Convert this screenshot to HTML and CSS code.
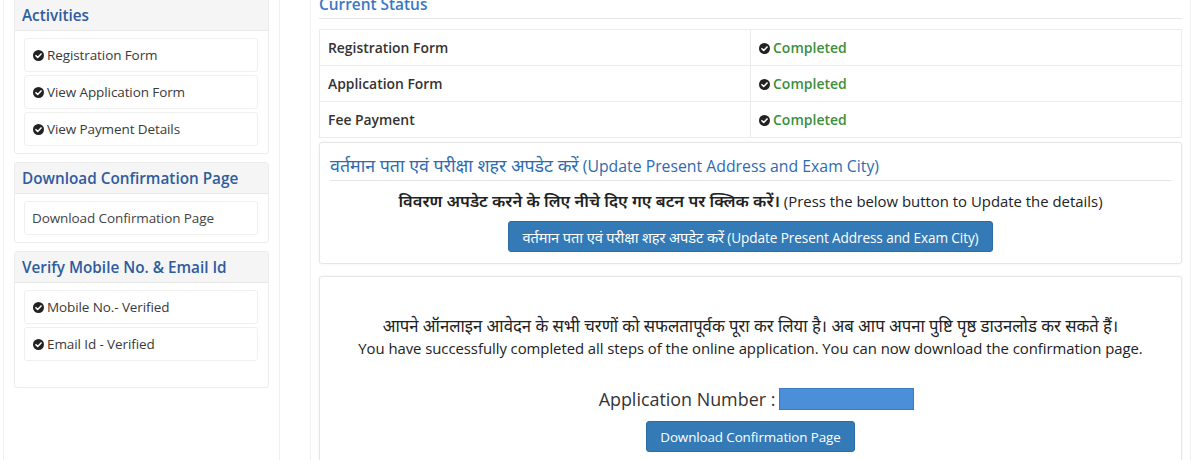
FILE: index.html
```html
<!DOCTYPE html>
<html lang="hi">
<head>
<meta charset="utf-8">
<title>Dashboard</title>
<link rel="stylesheet" href="styles.css">
</head>
<body>
<div class="page">
  <aside class="side-col">
    <section class="panel first">
      <div class="panel-head">Activities</div>
      <div class="panel-body">
        <div class="item"><svg class="ok" viewBox="0 0 12 12"><circle cx="6" cy="6" r="6"/><path d="M3.2 6.2l1.9 1.9 3.7-3.8" /></svg>Registration Form</div>
        <div class="item"><svg class="ok" viewBox="0 0 12 12"><circle cx="6" cy="6" r="6"/><path d="M3.2 6.2l1.9 1.9 3.7-3.8" /></svg>View Application Form</div>
        <div class="item"><svg class="ok" viewBox="0 0 12 12"><circle cx="6" cy="6" r="6"/><path d="M3.2 6.2l1.9 1.9 3.7-3.8" /></svg>View Payment Details</div>
      </div>
    </section>
    <section class="panel">
      <div class="panel-head">Download Confirmation Page</div>
      <div class="panel-body">
        <div class="item plain">Download Confirmation Page</div>
      </div>
    </section>
    <section class="panel">
      <div class="panel-head">Verify Mobile No. &amp; Email Id</div>
      <div class="panel-body tall">
        <div class="item"><svg class="ok" viewBox="0 0 12 12"><circle cx="6" cy="6" r="6"/><path d="M3.2 6.2l1.9 1.9 3.7-3.8" /></svg>Mobile No.- Verified</div>
        <div class="item"><svg class="ok" viewBox="0 0 12 12"><circle cx="6" cy="6" r="6"/><path d="M3.2 6.2l1.9 1.9 3.7-3.8" /></svg>Email Id - Verified</div>
      </div>
    </section>
  </aside>

  <main class="main-col">
    <h3 class="status-title">Current Status</h3>
    <table class="status">
      <tr><td>Registration Form</td><td class="done"><svg class="ok" viewBox="0 0 12 12"><circle cx="6" cy="6" r="6"/><path d="M3.2 6.2l1.9 1.9 3.7-3.8" /></svg>Completed</td></tr>
      <tr><td>Application Form</td><td class="done"><svg class="ok" viewBox="0 0 12 12"><circle cx="6" cy="6" r="6"/><path d="M3.2 6.2l1.9 1.9 3.7-3.8" /></svg>Completed</td></tr>
      <tr><td>Fee Payment</td><td class="done"><svg class="ok" viewBox="0 0 12 12"><circle cx="6" cy="6" r="6"/><path d="M3.2 6.2l1.9 1.9 3.7-3.8" /></svg>Completed</td></tr>
    </table>

    <section class="box update">
      <h4 class="update-title"><span class="dv">वर्तमान पता एवं परीक्षा शहर अपडेट करें</span> (Update Present Address and Exam City)</h4>
      <p class="update-text"><span class="dv">विवरण अपडेट करने के लिए नीचे दिए गए बटन पर क्लिक करें।</span> (Press the below button to Update the details)</p>
      <div class="center"><button class="btn wide"><span class="dv">वर्तमान पता एवं परीक्षा शहर अपडेट करें</span> (Update Present Address and Exam City)</button></div>
    </section>

    <section class="box download">
      <p class="hi-line"><span class="dv">आपने ऑनलाइन आवेदन के सभी चरणों को सफलतापूर्वक पूरा कर लिया है। अब आप अपना पुष्टि पृष्ठ डाउनलोड कर सकते हैं।</span></p>
      <p class="en-line">You have successfully completed all steps of the online application. You can now download the confirmation page.</p>
      <div class="appno">Application Number : <span class="mask"></span></div>
      <div class="center"><button class="btn">Download Confirmation Page</button></div>
    </section>
  </main>
</div>
</body>
</html>
```

FILE: styles.css
```css
* { box-sizing: border-box; }
html, body { margin: 0; padding: 0; background: #fff; }
body {
  font-family: "Open Sans", "Noto Sans", sans-serif;
  color: #333;
  font-size: 13px;
  overflow: hidden;
  height: 460px;
}
.page {
  display: flex;
  margin-top: -6px;
  padding-left: 3px;
  gap: 30px;
}
.side-col {
  width: 277px;
  border-left: 1px solid #f1f1f1;
  border-right: 1px solid #f1f1f1;
  padding: 0 10px;
  min-height: 480px;
}
.panel {
  border: 1px solid #ececec;
  border-radius: 3px;
  margin-top: 8px;
  background: #fff;
}
.panel.first { margin-top: 0; }
.panel-head {
  background: #f5f5f5;
  border-bottom: 1px solid #e8e8e8;
  color: #2f5c9e;
  font-size: 15.3px;
  font-weight: 600;
  line-height: 20px;
  padding: 5px 7px;
}
.panel.first .panel-head { padding-top: 10px; }
.panel-body {
  padding: 7px 10px 7px 9px;
  display: flex;
  flex-direction: column;
  gap: 3px;
}
.panel-body.tall { padding-bottom: 26px; }
.item {
  border: 1px solid #efefef;
  border-radius: 3px;
  height: 34px;
  display: flex;
  align-items: center;
  padding-left: 8px;
  font-size: 13.5px;
  color: #3a3a3a;
  letter-spacing: -0.1px;
}
.item.plain { padding-left: 7px; color: #444; }
.ok {
  width: 11px;
  height: 11px;
  margin-right: 3px;
  flex: none;
}
.ok circle { fill: #222; }
.ok path { fill: none; stroke: #fff; stroke-width: 1.7; stroke-linecap: round; stroke-linejoin: round; }

.main-col {
  width: 881px;
  border-left: 1px solid #f1f1f1;
  border-right: 1px solid #f1f1f1;
  padding: 0 8px;
  min-height: 480px;
}
.status-title {
  margin: 0;
  font-size: 15.4px;
  font-weight: 600;
  color: #3a78c4;
  line-height: 20px;
  padding-top: 1px;
  padding-bottom: 3px;
  border-bottom: 1px solid #e6e6e6;
}
.status {
  width: 100%;
  border-collapse: collapse;
  margin-top: 10px;
  border: 1px solid #e9e9e9;
}
.status td {
  border: 1px solid #ececec;
  height: 36px;
  padding: 0 8px;
  font-weight: 600;
  font-size: 13.9px;
  color: #333;
  width: 50%;
}
.status td.done { color: #3c8f3c; font-size: 14px; }
.status td.done .ok { vertical-align: -1px; }

.box {
  border: 1px solid #e6e6e6;
  border-radius: 3px;
  box-shadow: 0 0 3px rgba(0,0,0,0.06);
  background: #fff;
}
.update {
  margin-top: 4px;
  padding: 11px 10px 11px 10px;
}
.update-title {
  margin: 0;
  font-size: 15.8px;
  font-weight: 400;
  color: #2d6bb1;
  line-height: 22px;
  padding-bottom: 3px;
  border-bottom: 1px solid #e3e3e3;
}
.update-title .dv { font-size: 17.8px; }
.update-text {
  margin: 9px 0 9px;
  text-align: center;
  font-size: 14.9px;
  color: #222;
  line-height: 22px;
}
.update-text .dv { font-size: 16.5px; font-weight: 600; }
.center { text-align: center; }
.btn {
  font-family: "Open Sans", "Noto Sans", sans-serif;
  background: #337ab7;
  border: 1px solid #2e6da4;
  border-radius: 3px;
  color: #fff;
  font-size: 13.4px;
  height: 31px;
  padding: 0 13px;
  letter-spacing: -0.1px;
  vertical-align: top;
}
.btn.wide { font-size: 13.6px; }
.btn .dv { font-size: 14.6px; }
.download {
  margin-top: 12px;
  padding: 38px 10px 40px;
  min-height: 200px;
}
.hi-line {
  margin: 0;
  text-align: center;
  font-size: 16.7px;
  color: #222;
  line-height: 22px;
}
.en-line {
  margin: 0;
  text-align: center;
  font-size: 14.9px;
  color: #222;
  line-height: 22px;
  letter-spacing: -0.05px;
}
.appno {
  margin-top: 28px;
  padding-left: 12px;
  font-size: 17.9px;
  color: #333;
  line-height: 24px;
  display: flex;
  justify-content: center;
  align-items: center;
  gap: 4px;
}
.mask {
  display: inline-block;
  width: 135px;
  height: 22px;
  background: #4a8fd8;
  border: 1px solid #3a7bc4;
}
.download .center { margin-top: 10px; }
```
